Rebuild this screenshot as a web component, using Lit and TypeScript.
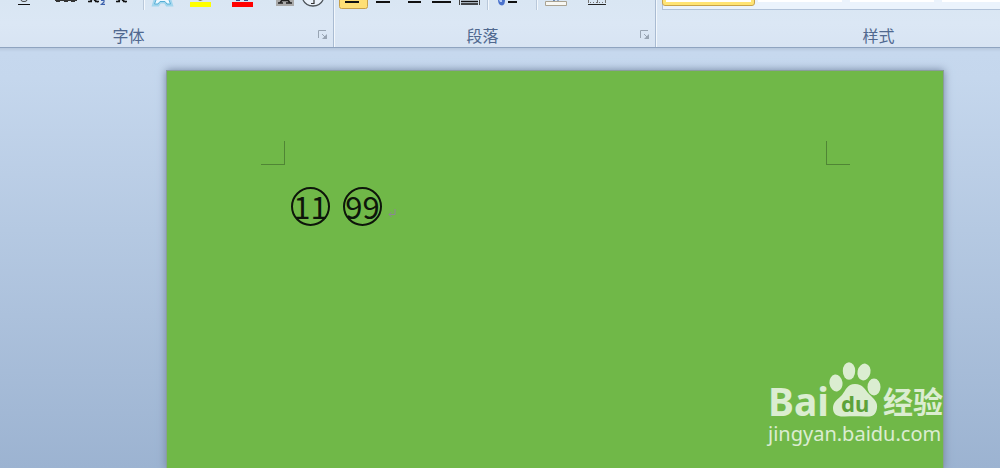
import { LitElement, html, css, svg, TemplateResult, SVGTemplateResult } from "lit";
import { customElement, property } from "lit/decorators.js";

interface Tool {
  name: string;
  from: number;
  to: number;
  art: SVGTemplateResult;
  separator?: boolean;
}

const divider = (from: number, to: number, x: number): Tool => ({
  name: "",
  from,
  to,
  separator: true,
  art: svg`<path d="M${x}.5 0V10" stroke="#b9c8da"/><path d="M${x + 1}.5 0V10" stroke="#f3f8fd"/>`,
});

const fontTools: Tool[] = [
  { name: "下划线", from: 0, to: 46, art: svg`<path d="M21 0Q21 1.500 24 1.500T27 0" fill="none" stroke="#444"/><path d="M18 4.500H30" stroke="#111"/>` },
  { name: "删除线", from: 46, to: 84, art: svg`<path d="M55 .5H77M56 1.500H60M64 1.500H68M75 1.500H71" fill="none" stroke="#333"/>` },
  { name: "下标", from: 84, to: 108, art: svg`<path d="M92 0L89 2M94 0L98 2M88 1.500H92M95 1.500H99" fill="none" stroke="#111" stroke-width="1.400"/><path d="M101 .5H104V2L101.500 4.300H105" fill="none" stroke="#3d62ad" stroke-width="1.200"/>` },
  { name: "上标", from: 108, to: 139, art: svg`<path d="M120 0L117 2M122 0L126 2M116 1.500H120M123 1.500H127" fill="none" stroke="#111" stroke-width="1.400"/>` },
  divider(139, 148, 143),
  { name: "文本效果", from: 148, to: 180, art: svg`<path d="M155 0L153.500 5H158L160 2H165L167 5H171.500L170 0" fill="#d9effa" stroke="#a2d6ed" stroke-width="3"/><path d="M156 0L154.500 4H158L160 1.500H165L167 4H170.500L169 0" fill="#eef9ff" stroke="#56aed7"/>` },
  { name: "突出显示", from: 180, to: 220, art: svg`<path d="M198 0H203L200 1Z" fill="#776b49"/><path d="M190 2H211V7H190Z" fill="#ff0"/>` },
  { name: "字体颜色", from: 220, to: 264, art: svg`<path d="M236 .5H240M244 .5H248" fill="none" stroke="#364d8a"/><path d="M232 2H253V7H232Z" fill="#f00"/>` },
  { name: "字符底纹", from: 264, to: 298, art: svg`<path d="M276 0H294V6H276Z" fill="#aaa"/><path d="M282 0L280 3M288 0L290 3M282 .5H288M278 3H283M286 3H292" fill="none" stroke="#222" stroke-width="1.600"/>` },
  { name: "带圈字符", from: 298, to: 334, art: svg`<path d="M303 0C305 4 309 6 313 6S321 4 323 0" fill="#e9f1fa" stroke="#4c5359" stroke-width="1.300"/><path d="M314 0V3.500H311" fill="none" stroke="#333" stroke-width="1.200"/>` },
];

const paragraphTools: Tool[] = [
  { name: "左对齐", from: 334, to: 371, art: svg`<path d="M339.500 0V6.500Q339.500 8.500 341.500 8.500H365.500Q367.500 8.500 367.500 6.500V0" fill="#fedf75" stroke="#c7a04a"/><path d="M345 2H359" stroke="#111" stroke-width="2"/>` },
  { name: "居中", from: 371, to: 395, art: svg`<path d="M376 2H390" stroke="#111" stroke-width="2"/>` },
  { name: "右对齐", from: 395, to: 427, art: svg`<path d="M408 2H421" stroke="#111" stroke-width="2"/>` },
  { name: "两端对齐", from: 427, to: 455, art: svg`<path d="M432 2H451" stroke="#111" stroke-width="2"/>` },
  { name: "分散对齐", from: 455, to: 484, art: svg`<path d="M459.500 0V5M479.500 0V5" stroke="#444"/><path d="M461 1.500H478M461 4H478" stroke="#111" stroke-width="1.500"/>` },
  divider(484, 493, 487),
  { name: "行距", from: 493, to: 527, art: svg`<path d="M498 0H505Q505 5 502 5.500Q498 5 498 0Z" fill="#4a72cc"/><path d="M499 0H502V2H500Z" fill="#b5ccf5"/><path d="M508 2H517" stroke="#111" stroke-width="2"/>` },
  divider(527, 541, 536),
  { name: "底纹", from: 541, to: 575, art: svg`<path d="M553 0L555 1M558 0V1" stroke="#4c6b9b"/><path d="M545.500 1.500H566.500V5.500H545.500Z" fill="#f7f7f3" stroke="#aaa392"/>` },
  { name: "边框", from: 575, to: 620, art: svg`<path d="M588.500 0V3M597.500 0V3M605.500 0V3" stroke="#777"/><path d="M590 2.500H605" stroke="#777" stroke-dasharray="1 2"/><path d="M588 4.500H606" stroke="#222"/>` },
];

@customElement("ribbon-group")
class RibbonGroup extends LitElement {
  @property() label = "";
  @property({ attribute: false }) tools: Tool[] = [];

  static styles = css`
    :host {
      display: flex;
      flex-direction: column;
      flex: none;
      box-sizing: border-box;
      border-right: 1px solid #a9bbd2;
      box-shadow: 1px 0 #f2f7fc;
    }
    .tools {
      display: flex;
      height: 12px;
      overflow: hidden;
    }
    .tool {
      flex: none;
      height: 12px;
      padding: 0;
      border: 0;
      background: none;
    }
    .tool svg { display: block; width: 100%; height: 12px; }
    .caption {
      display: flex;
      align-items: center;
      margin-top: 11px;
      height: 23px;
    }
    .label {
      flex: 1;
      text-align: center;
      font: 16px/22px "Noto Sans CJK SC", sans-serif;
      color: #50688f;
    }
    .launcher {
      width: 24px;
      height: 20px;
      padding: 0;
      border: 0;
      background: none;
    }
    .launcher svg { display: block; margin: 0 9px; }
  `;

  render(): TemplateResult {
    return html`
      <div class="tools">
        <slot></slot>
        ${this.tools.map((t) => {
          const art = html`<svg viewBox="${t.from} 0 ${t.to - t.from} 12" aria-hidden="true">${t.art}</svg>`;
          return t.separator
            ? html`<span class="tool" style="width:${t.to - t.from}px">${art}</span>`
            : html`<button class="tool" aria-label=${t.name} style="width:${t.to - t.from}px">${art}</button>`;
        })}
      </div>
      <div class="caption">
        <span class="label">${this.label}</span>
        <button class="launcher" aria-label="${this.label}设置">
          <svg width="10" height="10" viewBox="0 0 10 10" fill="none" stroke="#98a4b3">
            <path d="M.5 8V.5H8M4 4L8 8" />
            <path d="M9 4V9H4Z" fill="#98a4b3" stroke="none" />
          </svg>
        </button>
      </div>
    `;
  }
}

@customElement("site-watermark")
class SiteWatermark extends LitElement {
  static styles = css`
    :host {
      display: block;
      color: #fff;
      opacity: 0.75;
      white-space: nowrap;
    }
    .brand { display: flex; align-items: flex-end; }
    .latin { width: 61px; font: bold 39px/32px "Noto Sans", sans-serif; }
    .paw { flex: none; width: 54px; height: 56px; }
    .du { font: bold 22px "Noto Sans", sans-serif; fill: #579b36; }
    .cjk { font: bold 30px/34px "Noto Sans CJK SC", sans-serif; }
    .site { margin-top: 4px; font: 20px/26px "Noto Sans", sans-serif; }
  `;

  render(): TemplateResult {
    return html`
      <div class="brand">
        <span class="latin">Bai</span>
        <svg class="paw" viewBox="0 0 54 56" fill="#fff">
          <ellipse cx="7" cy="22" rx="6.500" ry="8.500" transform="rotate(-8 7 22)" />
          <ellipse cx="20" cy="10" rx="6.200" ry="8.700" />
          <ellipse cx="35" cy="11" rx="6.500" ry="8.500" transform="rotate(12 35 11)" />
          <ellipse cx="45" cy="26" rx="6.500" ry="8.500" />
          <path d="M26 23C34 23 36 29 40 33C45 38 49 41 48 47C47 55 42 56 36 55.500C29 55 23 55 16 55.500C9 56 4 54 4 47C4 41 9 38 13 34C17 29 18 23 26 23Z" />
          <text class="du" x="12" y="51">du</text>
        </svg>
        <span class="cjk">经验</span>
      </div>
      <div class="site">jingyan.baidu.com</div>
    `;
  }
}

@customElement("app-root")
class AppRoot extends LitElement {
  static styles = css`
    :host {
      display: flex;
      flex-direction: column;
      min-height: 100vh;
      overflow: hidden;
      position: relative;
    }
    .ribbon {
      display: flex;
      height: 48px;
      overflow: hidden;
      box-sizing: border-box;
      background: linear-gradient(#d9e6f3, #dbe7f5 50%, #d8e4f3);
      border-bottom: 1px solid #8fa4c0;
    }
    .font { width: 386px; margin-left: -52px; }
    .font .clipped { flex: none; width: 52px; }
    .paragraph { width: 322px; }
    .styles { width: 470px; }
    .gallery {
      display: flex;
      gap: 8px;
      flex: none;
      box-sizing: border-box;
      width: 420px;
      height: 10px;
      margin-left: 6px;
      background: #ebf3fc;
      border: solid #b1c2d8;
      border-width: 0 1px 1px;
    }
    .style {
      flex: none;
      box-sizing: border-box;
      width: 84px;
      height: 2px;
      padding: 0;
      border: 0;
      background: #fff;
    }
    .style.selected {
      width: 91px;
      height: 5px;
      border: solid #ffe475;
      border-width: 0 3px 3px;
      border-radius: 0 0 2px 2px;
      outline: 1px solid #c9a349;
      margin-right: -4px;
    }
    .workspace {
      flex: 1;
      display: flex;
      padding: 23px 57px 0 167px;
      background: linear-gradient(#b7c8de, #c6d8ee 4px, #c5d7ed 30px, #9cb3d1);
    }
    .page {
      flex: 1;
      background: #70b848;
      box-shadow: 0 0 0 1px #8a9d9b, 0 0 8px 1px #7486a2;
    }
    .margins {
      display: flex;
      justify-content: space-between;
      padding: 70px 93px 0 94px;
    }
    .corner {
      width: 23px;
      height: 23px;
      border-bottom: 1px solid #508535;
    }
    .corner.left { border-right: 1px solid #508535; }
    .corner.right { border-left: 1px solid #508535; }
    .line {
      display: flex;
      align-items: center;
      gap: 13px;
      margin: 22px 0 0 124px;
    }
    .enclosed {
      display: flex;
      justify-content: center;
      box-sizing: border-box;
      width: 39px;
      height: 39px;
      border: 2px solid #0d150a;
      border-radius: 50%;
      font: 31px/34px "Noto Sans CJK SC", sans-serif;
      color: #0d150a;
    }
    .mark { margin: 14px 0 0 -7px; }
    .watermark {
      position: absolute;
      right: 57px;
      bottom: 21px;
    }
  `;

  render(): TemplateResult {
    return html`
      <header class="ribbon">
        <ribbon-group class="font" label="字体" .tools=${fontTools}>
          <span class="clipped"></span>
        </ribbon-group>
        <ribbon-group class="paragraph" label="段落" .tools=${paragraphTools}></ribbon-group>
        <ribbon-group class="styles" label="样式">
          <div class="gallery">
            <button class="style selected" aria-label="正文"></button>
            <button class="style" aria-label="无间隔"></button>
            <button class="style" aria-label="标题 1"></button>
            <button class="style" aria-label="标题 2"></button>
          </div>
        </ribbon-group>
      </header>
      <main class="workspace">
        <article class="page">
          <div class="margins">
            <span class="corner left"></span>
            <span class="corner right"></span>
          </div>
          <div class="line">
            <span class="enclosed">11</span>
            <span class="enclosed">99</span>
            <svg class="mark" width="8" height="9" viewBox="0 0 8 9" fill="none" stroke="#8c8694">
              <path d="M7 0V5.500H1M3.500 3L1 5.500L3.500 8" />
            </svg>
          </div>
        </article>
      </main>
      <site-watermark class="watermark"></site-watermark>
    `;
  }
}
